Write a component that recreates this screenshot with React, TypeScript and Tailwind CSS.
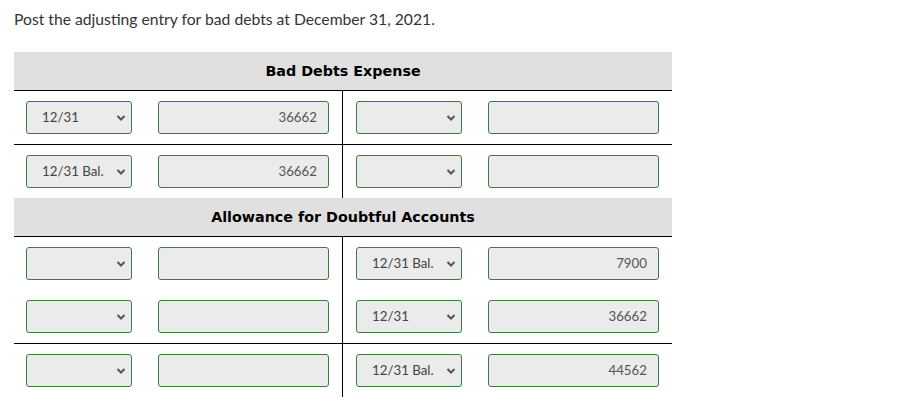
import React from "react";

function Chevron() {
  return (
    <svg
      className="pointer-events-none absolute right-[6px] top-1/2 -translate-y-1/2"
      width="10"
      height="7"
      viewBox="0 0 10 7"
    >
      <path d="M1.5 1.5 L5 5 L8.5 1.5" fill="none" stroke="#555" strokeWidth="2" />
    </svg>
  );
}

function Sel({ value }: { value?: string }) {
  return (
    <div className="relative w-[106px] h-[33px]">
      <div className="w-full h-full border border-[#3d7a3d] rounded-[3px] bg-[#ebebeb] flex items-center pl-[15px] text-[13.3px] text-[#444] font-['Lato']">
        {value ?? ""}
      </div>
      <Chevron />
    </div>
  );
}

function Inp({ value }: { value?: string }) {
  return (
    <div className="w-[171px] h-[33px] border border-[#3d7a3d] rounded-[3px] bg-[#ebebeb] flex items-center justify-end pr-[11px] text-[13.3px] text-[#555] font-['Lato']">
      {value ?? ""}
    </div>
  );
}

function Row({
  l,
  lv,
  r,
  rv,
  top,
}: {
  l?: string;
  lv?: string;
  r?: string;
  rv?: string;
  top: boolean;
}) {
  return (
    <div className={"flex " + (top ? "border-t border-black" : "")}>
      <div className="w-[329px] h-[53px] border-r border-black flex items-center pl-[12px] gap-[26px]">
        <Sel value={l} />
        <Inp value={lv} />
      </div>
      <div className="flex-1 h-[53px] flex items-center pl-[13px] gap-[26px]">
        <Sel value={r} />
        <Inp value={rv} />
      </div>
    </div>
  );
}

function Header({ title }: { title: string }) {
  return (
    <div className="h-[38px] pt-[2px] bg-[#e0e0e0] flex items-center justify-center font-['DejaVu_Sans',sans-serif] font-bold text-[14.3px] text-black">
      {title}
    </div>
  );
}

export default function App() {
  return (
    <div className="w-[918px] h-[408px] bg-white font-['Lato',sans-serif]">
      <div className="pl-[14px] pt-[9px] text-[15.7px] leading-[20px] text-[#333]">
        Post the adjusting entry for bad debts at December 31, 2021.
      </div>
      <div className="ml-[14px] mt-[23px] w-[658px]">
        <Header title="Bad Debts Expense" />
        <Row top l="12/31" lv="36662" />
        <Row top l="12/31 Bal." lv="36662" />
        <Header title="Allowance for Doubtful Accounts" />
        <Row top r="12/31 Bal." rv="7900" />
        <Row top={false} r="12/31" rv="36662" />
        <Row top r="12/31 Bal." rv="44562" />
      </div>
    </div>
  );
}
